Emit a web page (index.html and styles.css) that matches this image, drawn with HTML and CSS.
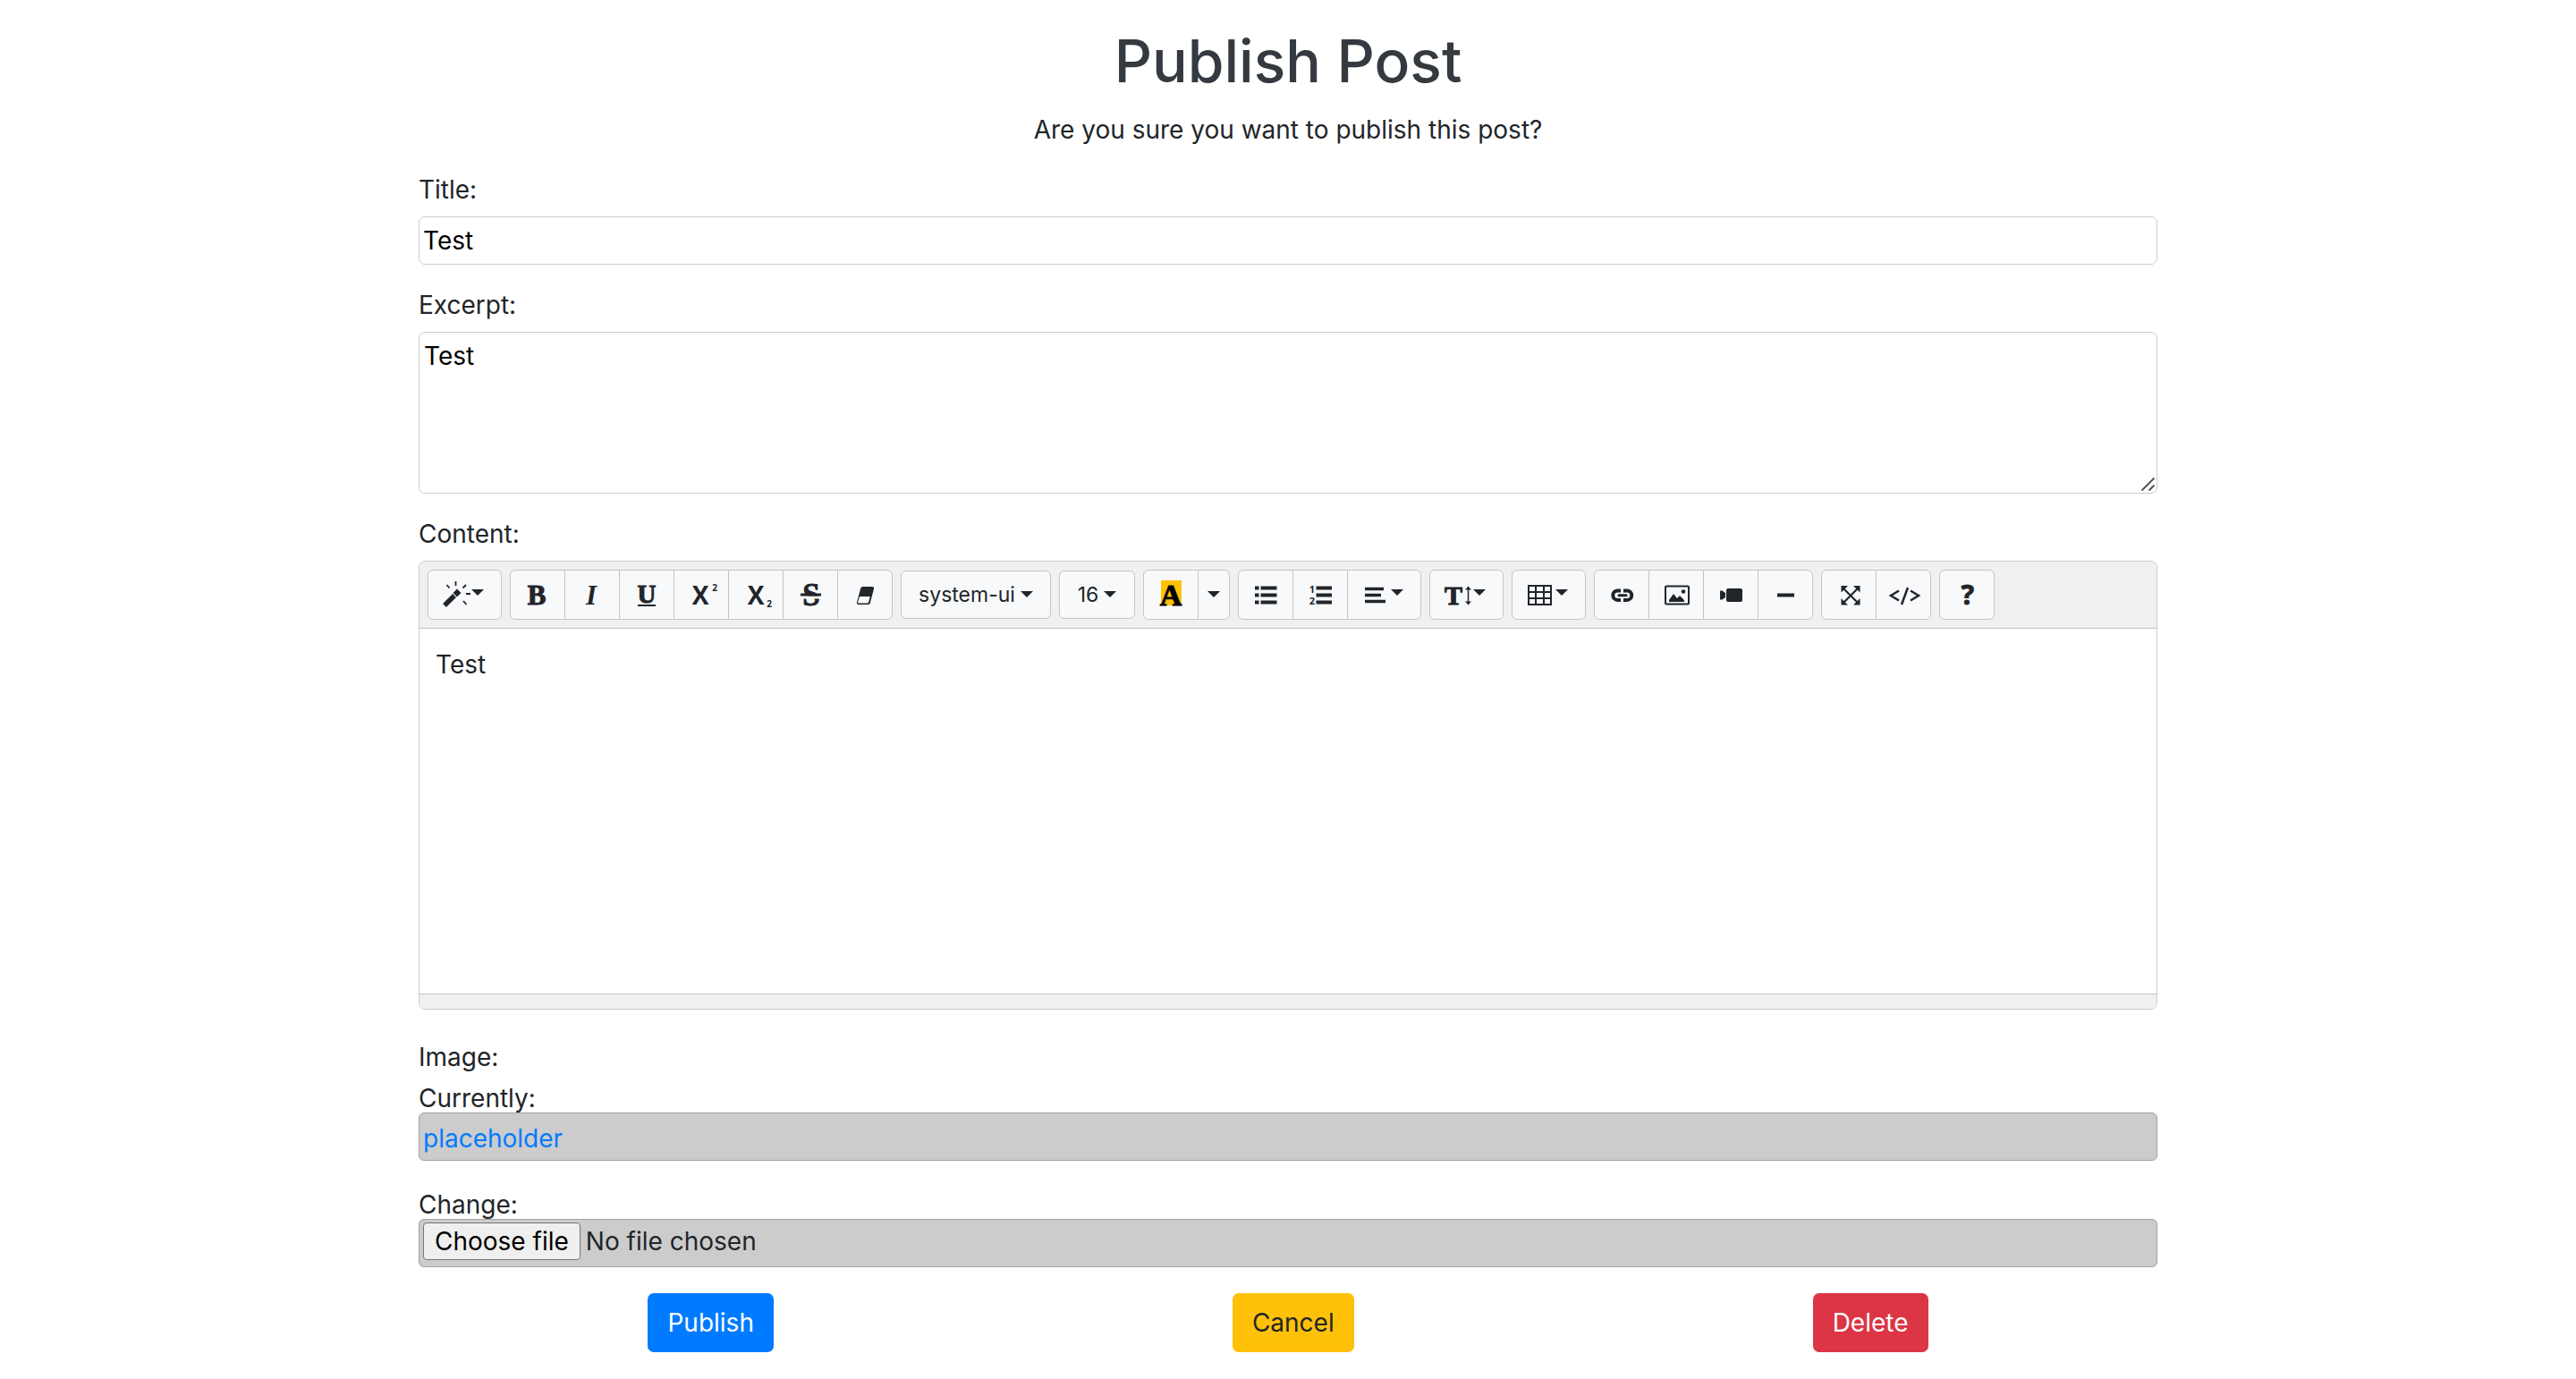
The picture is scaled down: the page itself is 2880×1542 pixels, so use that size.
FILE: index.html
```html
<!DOCTYPE html>
<html lang="en">
<head>
<meta charset="utf-8">
<meta name="viewport" content="width=device-width, initial-scale=1">
<title>Publish Post</title>
<link rel="stylesheet" href="styles.css">
</head>
<body>
<main class="page">
  <h1 class="heading">Publish Post</h1>
  <p class="question">Are you sure you want to publish this post?</p>
  <form class="form">
    <div class="group">
      <label class="label" for="title">Title:</label>
      <input class="field" id="title" type="text" value="Test">
    </div>
    <div class="group">
      <label class="label" for="excerpt">Excerpt:</label>
      <div class="area-wrap">
        <textarea class="field field-area" id="excerpt">Test</textarea>
        <svg class="grip" viewBox="0 0 15 15" aria-hidden="true"><path d="M.5 14.500 14.500.5M8.500 14.500l6-6"/></svg>
      </div>
    </div>
    <div class="group">
      <span class="label" id="content-label">Content:</span>
      <div class="editor">
        <div class="toolbar" role="toolbar" aria-label="Text formatting">
          <div class="btn-group">
            <button type="button" class="tool menu" aria-label="Style">
              <svg class="icon" viewBox="0 0 32 32"><path d="M3 28 14 17" stroke-width="5.5"/><path class="fill" d="m17 9.500 4.500 4.500-4.500 4.500-4.500-4.500z"/><path stroke-width="1.800" d="m5.500 5 3 3.500M15.500 1v5M27 5l-3.500 3.500M27 15h5M24 23l3.500 4"/></svg><span class="caret"></span>
            </button>
          </div>
          <div class="btn-group">
            <button type="button" class="tool" aria-label="Bold"><svg class="icon" viewBox="0 0 32 32"><text class="serif heavy" x="15" y="27" font-size="31">B</text></svg></button>
            <button type="button" class="tool" aria-label="Italic"><svg class="icon" viewBox="0 0 32 32"><text class="serif italic" x="15" y="27" font-size="31">I</text></svg></button>
            <button type="button" class="tool" aria-label="Underline"><svg class="icon" viewBox="0 0 32 32"><text class="serif heavy" x="16" y="25" font-size="29">U</text><path stroke-width="2" d="M6 28h20"/></svg></button>
            <button type="button" class="tool" aria-label="Superscript"><svg class="icon" viewBox="0 0 32 32"><text class="sans" x="15" y="27" font-size="28">X</text><text class="sans" x="31" y="12" font-size="10">2</text></svg></button>
            <button type="button" class="tool" aria-label="Subscript"><svg class="icon" viewBox="0 0 32 32"><text class="sans" x="16" y="27" font-size="28">X</text><text class="sans" x="31" y="30" font-size="10">2</text></svg></button>
            <button type="button" class="tool" aria-label="Strikethrough"><svg class="icon" viewBox="0 0 32 32"><text class="serif heavy" x="17" y="28" font-size="35">S</text><path class="knock" d="M5 19h23"/><path stroke-width="3" d="M5 16h23"/></svg></button>
            <button type="button" class="tool" aria-label="Remove formatting"><svg class="icon" viewBox="0 0 32 32"><path class="fill" fill-rule="evenodd" d="M13.500 7H24q2.500 0 2 2.500l-4 15Q22 27 19 27H9q-2.500 0-2-2.500l4-15Q11.500 7 13.500 7zM10 18l-1.800 6q-.4 1.500 1 1.500H18q1.800 0 2.200-1.500l1.600-6z"/></svg></button>
          </div>
          <div class="btn-group">
            <button type="button" class="tool text-menu font-name" aria-label="Font family">system-ui<span class="caret"></span></button>
          </div>
          <div class="btn-group">
            <button type="button" class="tool text-menu font-size" aria-label="Font size">16<span class="caret"></span></button>
          </div>
          <div class="btn-group">
            <button type="button" class="tool" aria-label="Recent color"><svg class="icon" viewBox="0 0 32 32"><path class="swatch" d="M5 0h23v28H5z"/><text class="serif black" x="16" y="28" font-size="34">A</text></svg></button>
            <button type="button" class="tool drop" aria-label="More colors"><span class="caret"></span></button>
          </div>
          <div class="btn-group">
            <button type="button" class="tool" aria-label="Unordered list"><svg class="icon" viewBox="0 0 32 32"><path stroke-width="4" d="M4 8.500h4.500M4 16.500h4.500M4 24.500h4.500M10.500 8.500h18M10.500 16.500h18M10.500 24.500h18"/></svg></button>
            <button type="button" class="tool" aria-label="Ordered list"><svg class="icon" viewBox="0 0 32 32"><path stroke-width="4" d="M11.500 8.500H29M11.500 16.500H29M11.500 24.500H29"/><text class="sans" x="7" y="14" font-size="11">1</text><text class="sans" x="7" y="27" font-size="11">2</text></svg></button>
            <button type="button" class="tool menu" aria-label="Paragraph">
              <svg class="icon" viewBox="0 0 32 32"><path stroke-width="3.500" d="M4 9.500h21M4 16.500h18M4 23.500h23"/></svg><span class="caret"></span>
            </button>
          </div>
          <div class="btn-group">
            <button type="button" class="tool menu" aria-label="Line height">
              <svg class="icon" viewBox="0 0 32 32"><text class="serif heavy" x="11" y="27" font-size="30">T</text><path stroke-width="1.500" d="M27.500 8v18"/><path class="fill" d="m27.500 6.500 3.500 4h-7zM27.500 27.500l3.500-4h-7z"/></svg><span class="caret"></span>
            </button>
          </div>
          <div class="btn-group">
            <button type="button" class="tool menu" aria-label="Table">
              <svg class="icon" viewBox="0 0 32 32"><path stroke-width="2" d="M3 6h25v21H3zM11 6v21M20 6v21M3 13h25M3 20h25"/></svg><span class="caret"></span>
            </button>
          </div>
          <div class="btn-group">
            <button type="button" class="tool" aria-label="Link"><svg class="icon" viewBox="0 0 32 32"><path stroke-width="4" d="M15 11.500h-3.500a5.200 5.200 0 0 0 0 10.400H15M18 11.500h4a5.200 5.200 0 0 1 0 10.400h-4"/><path stroke-width="3" stroke-linecap="round" d="M13 16.700h8"/></svg></button>
            <button type="button" class="tool" aria-label="Picture"><svg class="icon" viewBox="0 0 32 32"><rect x="4" y="6.500" width="26" height="20" rx="1" stroke-width="2"/><path class="fill" d="M8 24v-2l5-7 4 5 3-3 5 5v2z"/><circle class="fill" cx="24" cy="12.500" r="2.300"/></svg></button>
            <button type="button" class="tool" aria-label="Video"><svg class="icon" viewBox="0 0 32 32"><rect class="fill" x="11" y="9" width="18" height="15" rx="2"/><path class="fill" d="m4 11.500 2.500 0L10 14v5l-3.500 2.500H4z"/></svg></button>
            <button type="button" class="tool" aria-label="Horizontal rule"><svg class="icon" viewBox="0 0 32 32"><path stroke-width="4" d="M7 16.500h19"/></svg></button>
          </div>
          <div class="btn-group">
            <button type="button" class="tool" aria-label="Full screen"><svg class="icon" viewBox="0 0 32 32"><path stroke-width="2.200" d="m9 8 18 18M27 8 9 26"/><path class="fill" d="M7.500 6h7.500l-7.500 7.500zM28.500 6H21l7.500 7.500zM7.500 27.500h7.500l-7.500-7.500zM28.500 27.500H21l7.500-7.500z"/></svg></button>
            <button type="button" class="tool" aria-label="Code view"><svg class="icon" viewBox="0 0 32 32"><path stroke-width="2.500" d="m11 11.500-9 5.500 9 5.500M24 11.500l9 5.500-9 5.500M21 8l-7 19"/></svg></button>
          </div>
          <div class="btn-group">
            <button type="button" class="tool" aria-label="Help"><svg class="icon" viewBox="0 0 32 32"><text class="sans heavy" x="17" y="27" font-size="30">?</text></svg></button>
          </div>
        </div>
        <div class="editable" contenteditable="true" role="textbox" aria-labelledby="content-label">Test</div>
        <div class="statusbar"></div>
      </div>
    </div>
    <div class="group image-group">
      <span class="label">Image:</span>
      <span class="sub-label">Currently:</span>
      <div class="file-box"><a class="link" href="#placeholder">placeholder</a></div>
      <label class="sub-label change" for="image">Change:</label>
      <div class="file-box">
        <span class="file-button" aria-hidden="true">Choose file</span>
        <span class="file-status" aria-hidden="true">No file chosen</span>
        <input class="file-input" id="image" type="file">
      </div>
    </div>
    <div class="actions">
      <button type="submit" class="btn publish">Publish</button>
      <button type="button" class="btn cancel">Cancel</button>
      <button type="button" class="btn delete">Delete</button>
    </div>
  </form>
</main>
</body>
</html>
```
FILE: styles.css
```css
* {
  box-sizing: border-box;
}

body {
  margin: 0;
  background: #fff;
  color: #212529;
  font-family: Inter, "Liberation Sans", sans-serif;
  font-size: 28px;
  line-height: 42px;
}

button,
input,
textarea {
  margin: 0;
  font: inherit;
}

.page {
  width: 67.5%;
  margin: 0 auto;
  padding: 26px 0 30px;
}

.heading {
  margin: 0 0 14px;
  color: #343a40;
  font-size: 66px;
  font-weight: 500;
  line-height: 84px;
  text-align: center;
}

.question {
  margin: 0 0 25px;
  text-align: center;
}

.form,
.group {
  display: flex;
  flex-direction: column;
}

.form {
  gap: 24px;
}

.label {
  margin-bottom: 9px;
}

.field {
  width: 100%;
  height: 54px;
  padding: 0 4px;
  border: 1px solid #ccc;
  border-radius: 7px;
  background: #fff;
  color: #000;
}

.area-wrap {
  position: relative;
}

.field-area {
  display: block;
  height: 181px;
  padding: 5px;
  resize: vertical;
}

.field-area::-webkit-resizer {
  display: none;
}

.grip {
  position: absolute;
  right: 3px;
  bottom: 3px;
  width: 15px;
  height: 15px;
  fill: none;
  stroke: #555;
  stroke-width: 2;
  pointer-events: none;
}

.editor {
  border: 1px solid #ccc;
  border-radius: 7px;
  overflow: hidden;
}

.toolbar {
  display: flex;
  flex-wrap: wrap;
  align-items: center;
  gap: 9px;
  padding: 9px;
  border-bottom: 1px solid #c5c5c5;
  background: #f0f0f0;
}

.btn-group {
  display: flex;
}

.tool {
  display: flex;
  align-items: center;
  justify-content: center;
  width: 62px;
  height: 56px;
  padding: 0;
  border: 1px solid #c5c5c5;
  background: #f8f9fa;
  color: #212529;
}

.tool + .tool {
  margin-left: -1px;
}

.tool:first-child {
  border-top-left-radius: 6px;
  border-bottom-left-radius: 6px;
}

.tool:last-child {
  border-top-right-radius: 6px;
  border-bottom-right-radius: 6px;
}

.menu {
  justify-content: flex-start;
  gap: 1px;
  width: 83px;
  padding-left: 15px;
}

.menu .caret {
  margin-bottom: 6px;
}

.text-menu {
  gap: 6px;
  height: 54px;
  font-size: 23px;
}

.text-menu .caret,
.drop .caret {
  margin-bottom: 2px;
}

.font-name {
  width: 168px;
}

.font-size {
  width: 85px;
}

.drop {
  width: 36px;
}

.caret {
  border-top: 7px solid #212529;
  border-right: 7px solid transparent;
  border-left: 7px solid transparent;
}

.icon {
  flex: none;
  width: 32px;
  height: 32px;
  overflow: visible;
  fill: none;
  stroke: #212529;
}

.icon text {
  fill: #212529;
  stroke: none;
  font-weight: 700;
  text-anchor: middle;
}

.icon .serif {
  font-family: "Liberation Serif", serif;
}

.icon .sans {
  font-family: "Open Sans", sans-serif;
}

.icon .italic {
  font-style: italic;
}

.icon .heavy {
  stroke: #212529;
  stroke-width: 1;
}

.icon .black {
  fill: #000;
  stroke: #000;
  stroke-width: 1;
}

.icon .fill {
  fill: #212529;
  stroke: none;
}

.icon .swatch {
  fill: #ffc107;
  stroke: none;
}

.icon .knock {
  stroke: #f8f9fa;
  stroke-width: 3;
}

.editable {
  min-height: 408px;
  padding: 19px 18px;
  outline: none;
}

.statusbar {
  height: 17px;
  border-top: 1px solid #c5c5c5;
  background: #f0f0f0;
}

.image-group {
  margin-top: 8px;
}

.sub-label {
  line-height: 32px;
}

.change {
  margin-top: 33px;
}

.file-box {
  position: relative;
  display: flex;
  align-items: flex-start;
  gap: 6px;
  height: 54px;
  padding: 3px 4px;
  border: 1px solid #a3a3a3;
  border-radius: 6px;
  background: #ccc;
}

.link {
  padding-top: 4px;
  color: #007bff;
  text-decoration: none;
}

.file-button {
  height: 42px;
  padding: 0 12px;
  border: 1px solid #767676;
  border-radius: 4px;
  background: #efefef;
  color: #000;
  line-height: 40px;
}

.file-input {
  position: absolute;
  inset: 0;
  width: 100%;
  height: 100%;
  opacity: 0;
}

.actions {
  display: flex;
  justify-content: space-around;
  margin-top: 5px;
}

.btn {
  height: 66px;
  padding: 0 22px;
  border: 0;
  border-radius: 7px;
  color: #fff;
}

.publish {
  background: #007bff;
}

.cancel {
  background: #ffc107;
  color: #212529;
}

.delete {
  background: #dc3545;
}
```
